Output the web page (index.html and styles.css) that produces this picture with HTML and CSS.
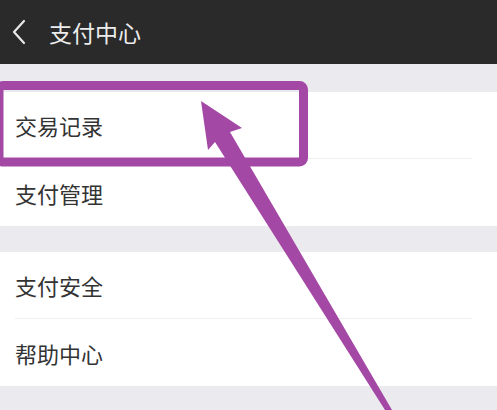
FILE: index.html
```html
<!DOCTYPE html>
<html lang="zh-CN">
<head>
  <meta charset="UTF-8">
  <meta name="viewport" content="width=device-width, initial-scale=1.0">
  <title>支付中心</title>
  <link rel="stylesheet" href="styles.css">
</head>
<body>
  <header class="topbar">
    <svg class="back" width="14" height="26" viewBox="0 0 14 26">
      <polyline points="12,2 2,13 12,24" fill="none" stroke="#e8e8e8" stroke-width="2.2" stroke-linecap="round" stroke-linejoin="round"/>
    </svg>
    <span class="title">支付中心</span>
  </header>

  <section class="group">
    <div class="row">交易记录</div>
    <div class="row">支付管理</div>
  </section>

  <section class="group">
    <div class="row">支付安全</div>
    <div class="row">帮助中心</div>
  </section>

  <!-- annotation drawn over the screen -->
  <svg class="mark" width="497" height="410" viewBox="0 0 497 410">
    <rect x="-1" y="85.5" width="304.5" height="76.5" rx="4" fill="none" stroke="#a448a5" stroke-width="9"/>
    <polygon points="201,101 242,128 230,132 392,410 385,410 215,142 208,150" fill="#a448a5"/>
  </svg>
</body>
</html>
```

FILE: styles.css
```css
body {
  margin: 0;
  padding: 0;
  background: #ebeaee;
  font-family: "Noto Sans CJK SC", "Noto Sans", sans-serif;
  height: 410px;
  overflow: hidden;
  position: relative;
}

.topbar {
  height: 64px;
  background: #2a2a2a;
  display: flex;
  align-items: center;
  padding-left: 12px;
}

.back {
  display: block;
  margin-right: 23px;
}

.title {
  color: #ececec;
  font-size: 23px;
  line-height: 1;
}

.group {
  background: #fff;
  margin-top: 28px;
}

.group + .group {
  margin-top: 26px;
}

.row {
  height: 67px;
  display: flex;
  align-items: center;
  margin-left: 15px;
  font-size: 22px;
  color: #333;
}

.row:first-child {
  height: 66px;
  border-bottom: 1px solid #efefef;
  margin-right: 25px;
}

.mark {
  position: absolute;
  top: 0;
  left: 0;
  pointer-events: none;
}
```
